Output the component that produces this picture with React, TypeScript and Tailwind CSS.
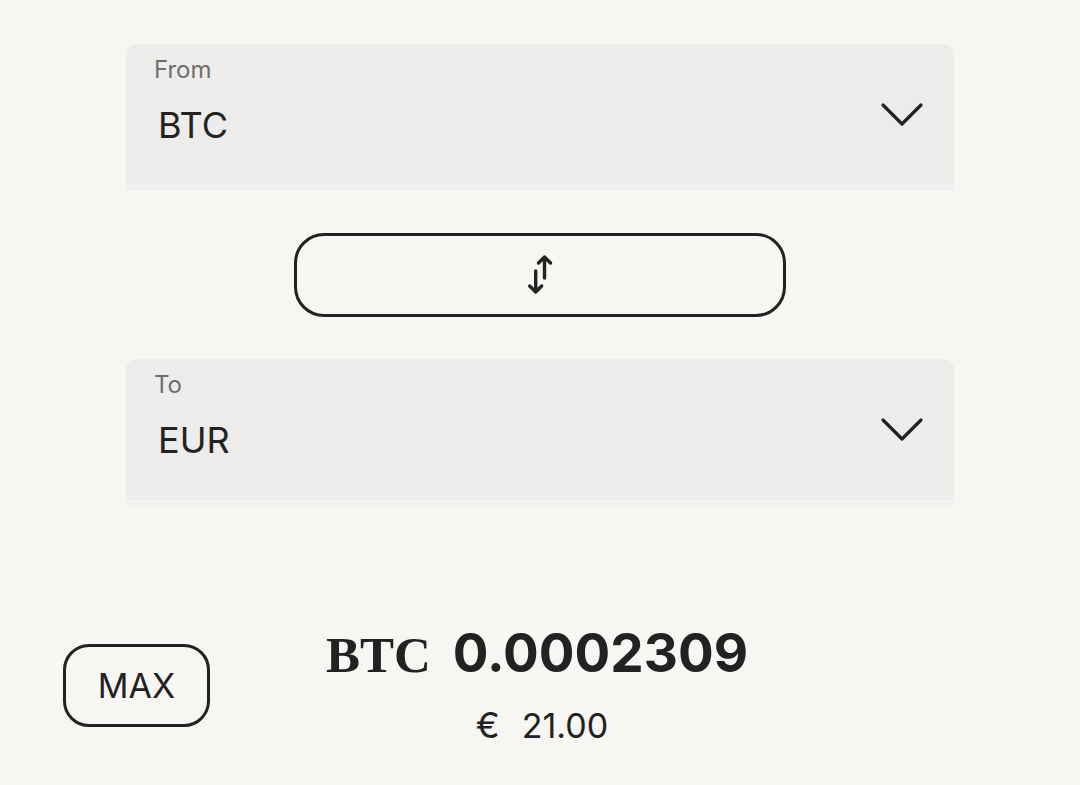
import React from "react";

function Chevron() {
  return (
    <svg width="44" height="26" viewBox="0 0 44 26" fill="none" className="shrink-0">
      <path d="M3 3 L22 22 L41 3" stroke="#222" strokeWidth="3.2" strokeLinecap="round" strokeLinejoin="round" />
    </svg>
  );
}

function SwapIcon() {
  return (
    <svg width="28" height="42" viewBox="0 0 28 42" fill="none">
      <path d="M18.5 24 V3 M12.5 9 L18.5 3 L24.5 9" stroke="#222" strokeWidth="3.4" strokeLinecap="round" strokeLinejoin="round" />
      <path d="M9.7 17 V38 M3.7 32 L9.7 38 L15.7 32" stroke="#222" strokeWidth="3.4" strokeLinecap="round" strokeLinejoin="round" />
    </svg>
  );
}

function CurrencySelect({ label, value }: { label: string; value: string }) {
  return (
    <div>
      <div className="flex h-[141px] items-center justify-between rounded-t-[10px] bg-[#edecea] pl-[28px] pr-[30px]">
        <div className="flex flex-col self-start pt-[11px]">
          <span className="text-[24px] leading-[30px] text-[#6f6f6f]">{label}</span>
          <span className="mt-[18px] pl-[4px] text-[36px] leading-[44px] text-[#222]">{value}</span>
        </div>
        <Chevron />
      </div>
      <div className="mt-px h-[4px] bg-[#eef0f2]" />
    </div>
  );
}

export default function App() {
  return (
    <div className="min-h-screen bg-[#f7f6f3] font-['Inter',sans-serif] text-[#222]">
      <div className="mx-auto w-[828px] pt-[44px]">
        <CurrencySelect label="From" value="BTC" />
        <button
          type="button"
          className="mx-auto mt-[43px] flex h-[84px] w-[492px] items-center justify-center rounded-[30px] border-[3px] border-[#222]"
        >
          <SwapIcon />
        </button>
        <div className="mt-[42px]">
          <CurrencySelect label="To" value="EUR" />
        </div>
      </div>

      <div className="mt-[122px] grid grid-cols-[1fr_auto_1fr] items-center px-[63px]">
        <div>
          <button
            type="button"
            className="flex h-[83px] w-[147px] items-center justify-center rounded-[26px] border-[3px] border-[#222] text-[34px]"
          >
            MAX
          </button>
        </div>
        <div className="flex flex-col items-center pr-[6px]">
          <div className="flex items-baseline gap-[22px]">
            <span className="font-['Liberation_Serif',serif] text-[51px] font-bold leading-none">BTC</span>
            <span className="text-[53px] font-bold leading-none">0.0002309</span>
          </div>
          <div className="mt-[26px] flex items-baseline gap-[22px] pl-[10px] text-[34px] leading-none">
            <span className="text-[36px]">€</span>
            <span>21.00</span>
          </div>
        </div>
        <div />
      </div>
    </div>
  );
}
